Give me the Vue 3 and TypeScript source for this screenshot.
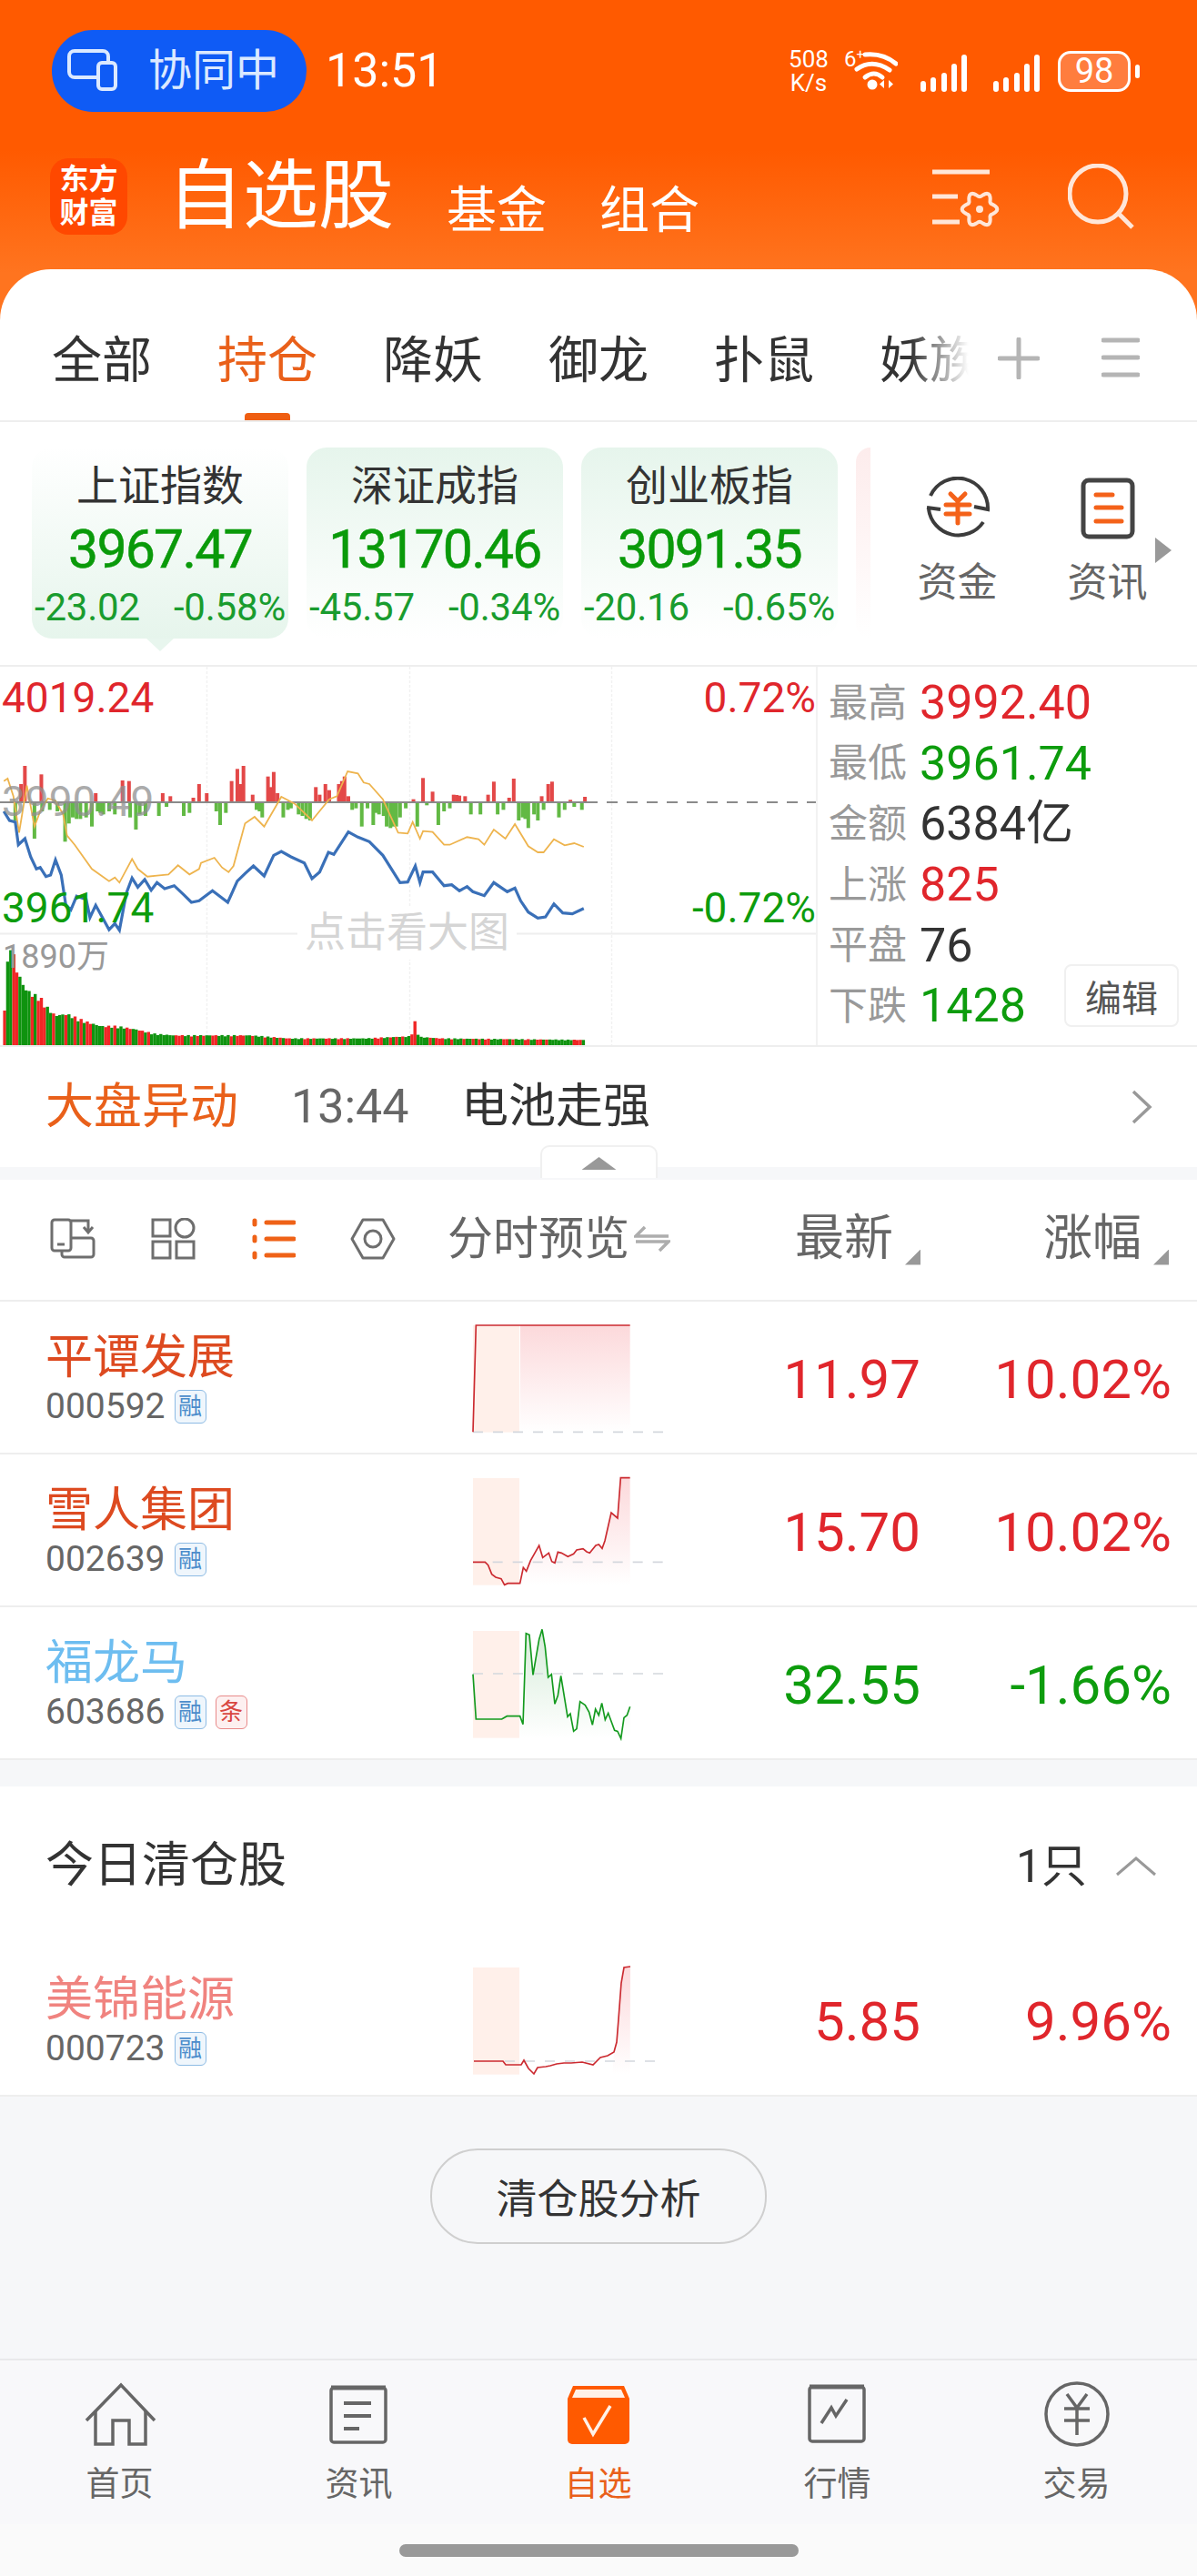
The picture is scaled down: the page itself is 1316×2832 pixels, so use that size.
<script setup lang="ts">
type Pt = [number, number];
const toPts = (a: Pt[]) => a.map((p) => p.join(",")).join(" ");
const zoomPts = (a: Pt[]) => a.map((p) => `${(p[0] / 2.376).toFixed(1)},${(p[1] / 3 - 1).toFixed(1)}`).join(" ");

const gearPath = (() => {
  const out: string[] = [];
  for (let i = 0; i < 72; i++) {
    const t = (i / 72) * Math.PI * 2;
    const r = 16.5 + 2.8 * Math.cos(6 * t);
    out.push(`${(53 + r * Math.cos(t)).toFixed(1)} ${(46 + r * Math.sin(t)).toFixed(1)}`);
  }
  return "M" + out.join("L") + "Z";
})();

const blue: Pt[] = [[10,480],[25,510],[40,515],[48,590],[65,570],[80,630],[95,670],[105,665],[120,695],[132,690],[145,640],[160,690],[172,790],[185,805],[200,760],[225,770],[235,830],[250,790],[285,870],[300,850],[312,872],[330,750],[345,700],[360,730],[378,705],[395,740],[410,715],[430,735],[455,725],[480,755],[500,780],[520,775],[555,742],[595,780],[620,710],[640,685],[662,660],[690,693],[715,625],[735,612],[760,630],[795,650],[815,702],[835,680],[858,615],[872,622],[910,548],[935,565],[965,580],[1000,625],[1045,715],[1065,713],[1085,660],[1097,715],[1105,680],[1130,680],[1160,725],[1180,722],[1200,742],[1220,728],[1235,745],[1265,758],[1290,715],[1325,745],[1345,733],[1360,775],[1380,812],[1405,832],[1425,828],[1447,785],[1470,815],[1495,818],[1525,800]];
const yellow: Pt[] = [[10,380],[20,372],[35,430],[50,550],[70,395],[90,530],[105,480],[125,437],[145,445],[165,490],[175,560],[195,590],[240,670],[285,710],[300,698],[312,715],[345,637],[360,670],[385,695],[410,692],[440,688],[465,658],[495,688],[520,670],[525,650],[560,633],[580,665],[597,680],[610,660],[640,520],[665,498],[690,530],[735,432],[770,455],[815,510],[860,440],[880,430],[908,348],[935,355],[950,385],[965,390],[1000,440],[1040,550],[1065,553],[1078,515],[1097,570],[1105,545],[1130,548],[1160,590],[1175,590],[1220,565],[1250,572],[1265,590],[1290,540],[1320,570],[1345,522],[1380,595],[1405,615],[1420,615],[1447,572],[1475,592],[1500,585],[1525,597]];
const bluePts = zoomPts(blue);
const yellowPts = zoomPts(yellow);

const redBars: Pt[] = [[55,60],[65,120],[108,92],[250,30],[320,72],[337,70],[425,30],[445,20],[505,15],[520,60],[540,30],[605,70],[620,110],[628,60],[636,120],[660,25],[700,85],[708,50],[715,100],[725,30],[825,50],[835,25],[850,60],[860,40],[885,60],[893,70],[900,85],[910,20],[1080,10],[1105,80],[1130,35],[1185,25],[1193,24],[1200,22],[1215,20],[1275,25],[1290,68],[1330,15],[1342,78],[1415,20],[1432,60],[1442,68],[1490,8],[1528,18]];
const greenBars: Pt[] = [[40,60],[90,120],[110,30],[130,25],[150,30],[170,130],[180,70],[190,50],[200,55],[210,55],[225,50],[240,80],[255,30],[262,35],[270,40],[285,30],[300,40],[340,50],[355,90],[365,40],[380,45],[415,45],[435,15],[480,45],[495,35],[565,30],[575,75],[590,35],[670,25],[678,30],[685,50],[740,50],[752,25],[760,20],[780,40],[790,45],[800,55],[810,60],[920,25],[930,20],[945,80],[960,20],[975,75],[983,35],[990,40],[1002,45],[1010,80],[1020,85],[1028,80],[1035,80],[1045,50],[1060,20],[1090,80],[1115,10],[1145,75],[1160,30],[1175,20],[1230,40],[1255,40],[1300,40],[1315,25],[1355,60],[1365,50],[1372,55],[1380,85],[1395,40],[1405,60],[1420,25],[1460,50],[1475,25],[1500,15],[1520,25]];
const macd = [
  ...redBars.map((b) => ({ x: b[0] / 2.376 - 2, y: 149 - b[1] / 3, h: b[1] / 3, c: "#e34848" })),
  ...greenBars.map((b) => ({ x: b[0] / 2.376 - 2, y: 149, h: b[1] / 3, c: "#62b944" })),
];

const volCurve: Pt[] = [[0,130],[10,130],[20,360],[40,250],[60,190],[80,170],[100,160],[120,125],[140,100],[170,105],[190,95],[220,80],[260,65],[300,65],[350,55],[400,40],[450,35],[520,35],[600,35],[650,35],[750,25],[850,25],[950,25],[1030,30],[1070,32],[1080,82],[1090,30],[1150,25],[1530,20]];
const volH = (x: number): number => {
  for (let i = 1; i < volCurve.length; i++) {
    const a = volCurve[i - 1];
    const b = volCurve[i];
    if (x <= b[0]) return a[1] + ((b[1] - a[1]) * (x - a[0])) / (b[0] - a[0]);
  }
  return 20;
};
const vol = Array.from({ length: 190 }, (_, i) => {
  const zx = 8 + i * 8;
  const n = zx === 1080 ? 1 : 0.9 + 0.14 * Math.abs(Math.sin(i * 1.7));
  const h = (volH(zx) * n) / 3;
  const red = zx === 1080 || zx === 40 || (i * 7 + (i * i) % 13) % 5 < 2;
  return { x: (zx / 2.376).toFixed(1), y: (417 - h).toFixed(1), h: h.toFixed(1), c: red ? "#f02525" : "#0f930f" };
});

const up = "#e0262c";
const down = "#0d9c0d";
interface Row {
  name: string; color: string; code: string; tags: string[]; price: string; pct: string; c: string;
  line: Pt[]; base: number; areaFrom: number; grad: string; dashFrom: number;
}
const rows: Row[] = [
  { name: "平谭发展", color: "#dd4a20", code: "000592", tags: ["融"], price: "11.97", pct: "10.02%", c: up, base: 430, areaFrom: 276, grad: "gr1", dashFrom: 120,
    line: [[120,430],[130,78],[276,78],[638,78]] },
  { name: "雪人集团", color: "#dd4a20", code: "002639", tags: ["融"], price: "15.70", pct: "10.02%", c: up, base: 355, areaFrom: 275, grad: "gr2", dashFrom: 185,
    line: [[120,860],[160,860],[170,870],[182,900],[195,910],[213,915],[224,935],[235,930],[275,930],[286,878],[296,890],[310,855],[338,805],[350,845],[370,830],[380,858],[390,863],[400,827],[412,830],[433,842],[452,833],[462,820],[483,816],[495,826],[505,830],[525,805],[535,802],[546,815],[555,790],[576,697],[597,715],[607,582],[638,582]].map((p) => [p[0], p[1] - 505] as Pt) },
  { name: "福龙马", color: "#6dbdf0", code: "603686", tags: ["融", "条"], price: "32.55", pct: "-1.66%", c: down, base: 219, areaFrom: 275, grad: "gr3", dashFrom: 120,
    line: [[120,1230],[130,1378],[215,1378],[232,1368],[275,1368],[285,1395],[295,1095],[306,1100],[318,1232],[338,1115],[348,1082],[358,1140],[368,1240],[379,1230],[390,1328],[400,1300],[410,1235],[432,1370],[441,1360],[452,1418],[462,1410],[473,1320],[490,1332],[503,1355],[514,1397],[524,1345],[535,1365],[545,1325],[556,1380],[566,1358],[587,1415],[597,1418],[608,1442],[618,1373],[628,1365],[638,1337]].map((p) => [p[0], p[1] - 1009] as Pt) },
];
const cleared: Row = { name: "美锦能源", color: "#f0837f", code: "000723", tags: ["融"], price: "5.85", pct: "9.96%", c: up, base: 387, areaFrom: 580, grad: "gr2", dashFrom: 225,
  line: [[123,387],[219,387],[228,399],[279,399],[288,384],[303,411],[321,429],[333,408],[360,405],[375,402],[396,396],[420,393],[444,393],[480,390],[516,399],[540,375],[564,369],[585,357],[594,324],[600,249],[609,129],[618,78],[639,75]] };
const lineStr = (r: Row) => toPts(r.line);
const areaStr = (r: Row) => {
  const pts = r.line.filter((p) => p[0] >= r.areaFrom);
  return toPts([[r.areaFrom, 431], ...pts, [638, 431]]);
};

const tabs = ["全部", "持仓", "降妖", "御龙", "扑鼠", "妖族"];
const indexes = [
  { name: "上证指数", price: "3967.47", a: "-23.02", b: "-0.58%" },
  { name: "深证成指", price: "13170.46", a: "-45.57", b: "-0.34%" },
  { name: "创业板指", price: "3091.35", a: "-20.16", b: "-0.65%" },
];
const stats = [
  { k: "最高", v: "3992.40", c: "#e0262c" },
  { k: "最低", v: "3961.74", c: "#0d9c0d" },
  { k: "金额", v: "6384亿", c: "#333333" },
  { k: "上涨", v: "825", c: "#e0262c" },
  { k: "平盘", v: "76", c: "#333333" },
  { k: "下跌", v: "1428", c: "#0d9c0d" },
];
const sig = [
  { x: 0, h: 12 }, { x: 11, h: 16 }, { x: 23, h: 21 }, { x: 34, h: 31 }, { x: 45, h: 41 },
];
</script>

<template>
  <div class="page">
    <header class="hdr">
      <div class="status">
        <div class="pill">
          <svg width="56" height="46" viewBox="0 0 56 46" fill="none" stroke="#dbe9ff" stroke-width="4">
            <path d="M34 31H8a6 6 0 0 1-6-6V8a6 6 0 0 1 6-6h31a6 6 0 0 1 6 6v6" />
            <rect x="34" y="15" width="19" height="29" rx="4" />
          </svg>
          <span class="pill-t">协同中</span>
        </div>
        <span class="time">13:51</span>
        <div class="st-right">
          <div class="speed"><span>508</span><span>K/s</span></div>
          <div class="wifi">
            <span class="net">6<span class="net-p">+</span></span>
            <svg width="60" height="48" viewBox="0 0 60 48">
              <path d="M24 6 Q44 4 58 16" fill="none" stroke="#fff" stroke-width="5" stroke-linecap="round" />
              <path d="M15 22 Q32 10 51 23" fill="none" stroke="#fff" stroke-width="5" stroke-linecap="round" />
              <path d="M24 31 Q34 23 43 31" fill="none" stroke="#fff" stroke-width="5" stroke-linecap="round" />
              <circle cx="32" cy="39" r="5.5" fill="#fff" />
              <path d="M45 34v9l-5-4.5zM50 34v9l5-4.5z" fill="#fff" />
            </svg>
          </div>
          <svg v-for="n in 2" :key="n" class="signal" width="52" height="42" viewBox="0 0 52 42">
            <rect v-for="s in sig" :key="s.x" :x="s.x" :y="42 - s.h" width="6" :height="s.h" rx="3" fill="#fff" />
          </svg>
          <div class="batt"><span>98</span></div>
          <i class="nub"></i>
        </div>
      </div>
      <div class="title-row">
        <div class="logo"><span>东方</span><span>财富</span></div>
        <h1 class="title">自选股</h1>
        <span class="sub-title">基金</span>
        <span class="sub-title">组合</span>
        <svg class="hd-ic1" width="76" height="68" viewBox="0 0 76 68" fill="none" stroke="#ffe6d8" stroke-width="5">
          <path d="M1 5H64M1 32H29M1 60H31" />
          <path :d="gearPath" stroke-width="4" />
          <circle cx="53" cy="46" r="4" fill="#ffe6d8" stroke="none" />
        </svg>
        <svg class="hd-ic2" width="76" height="76" viewBox="0 0 76 76" fill="none" stroke="#ffe6d8" stroke-width="5">
          <circle cx="33" cy="33" r="31" />
          <path d="M56 55L71 70" />
        </svg>
      </div>
    </header>

    <section class="panel">
      <div class="tabs">
        <div class="tab-scroll">
          <span v-for="(t, i) in tabs" :key="t" class="tab" :class="{ on: i === 1 }">{{ t }}</span>
          <i class="fade"></i>
        </div>
        <svg class="tab-ic plus" width="46" height="46" viewBox="0 0 46 46" stroke="#b5b5b5" stroke-width="5" stroke-linecap="round"><path d="M23 2V44M2 23H44" /></svg>
        <svg class="tab-ic menu" width="42" height="44" viewBox="0 0 42 44" stroke="#b5b5b5" stroke-width="5" stroke-linecap="round"><path d="M2 3H40M2 22H40M2 41H40" /></svg>
      </div>

      <div class="idx-row">
        <div v-for="(x, i) in indexes" :key="x.name" class="idx" :class="{ sel: i === 0 }">
          <div class="idx-n">{{ x.name }}</div>
          <div class="idx-p">{{ x.price }}</div>
          <div class="idx-s"><span>{{ x.a }}</span><span>{{ x.b }}</span></div>
        </div>
        <div class="idx-sliver"></div>
        <div class="quick">
          <svg width="72" height="72" viewBox="0 0 72 72" fill="none">
            <path d="M6 21A33 33 0 0 1 69 36L54 33M2 34L17 36M4 36A33 33 0 0 0 64 50" stroke="#3c3c3c" stroke-width="4" />
            <path d="M28 19l8 8 8-8M23 31H49M23 41H49M36 27V51" stroke="#f4621a" stroke-width="5" stroke-linecap="round" />
          </svg>
          <span>资金</span>
        </div>
        <div class="quick">
          <svg width="72" height="72" viewBox="0 0 72 72" fill="none">
            <rect x="9" y="4" width="54" height="62" rx="6" stroke="#444" stroke-width="5" />
            <path d="M23 20H41M23 34H51M23 49H51" stroke="#f4621a" stroke-width="5" stroke-linecap="round" />
          </svg>
          <span>资讯</span>
        </div>
        <i class="idx-next"></i>
      </div>

      <div class="market">
        <div class="chart">
          <svg class="chart-svg" width="897" height="416" viewBox="0 0 897 416">
            <path d="M227.5 0V416M450.5 0V416M672.5 0V416" stroke="#f1f1f1" stroke-width="1.5" stroke-dasharray="3 2" />
            <path d="M0 293.5H897" stroke="#eeeeee" stroke-width="2" />
            <g>
              <rect v-for="(b, i) in macd" :key="i" :x="b.x" :y="b.y" width="4" :height="b.h" :fill="b.c" />
            </g>
            <path d="M0 149H645" stroke="#8a8a8a" stroke-width="2" />
            <path d="M645 149H897" stroke="#8a8a8a" stroke-width="2" stroke-dasharray="12 10" />
            <polyline :points="yellowPts" fill="none" stroke="#eeb44e" stroke-width="1.8" />
            <polyline :points="bluePts" fill="none" stroke="#3a70b8" stroke-width="3.2" />
            <g>
              <rect v-for="(b, i) in vol" :key="i" :x="b.x" :y="b.y" width="3.4" :height="b.h" :fill="b.c" />
            </g>
          </svg>
          <span class="lb hi">4019.24</span>
          <span class="lb mid">3990.49</span>
          <span class="lb lo">3961.74</span>
          <span class="lb pct-hi">0.72%</span>
          <span class="lb pct-lo">-0.72%</span>
          <span class="lb volm">1890万</span>
          <span class="big">点击看大图</span>
        </div>
        <div class="stats">
          <div v-for="s in stats" :key="s.k" class="stat">
            <span class="stat-k">{{ s.k }}</span>
            <span class="stat-v" :style="{ color: s.c }">{{ s.v }}</span>
          </div>
          <span class="edit">编辑</span>
        </div>
      </div>

      <div class="alert">
        <span class="al-a">大盘异动</span>
        <span class="al-t">13:44</span>
        <span class="al-b">电池走强</span>
        <svg class="al-c" width="24" height="40" viewBox="0 0 24 40" fill="none" stroke="#999" stroke-width="3.5"><path d="M3 3L21 20L3 37" /></svg>
        <div class="handle"><i></i></div>
      </div>
      <div class="strip"></div>

      <div class="tools">
        <div class="tool-ics">
          <svg width="50" height="46" viewBox="0 0 50 46" fill="none" stroke="#6e6e6e" stroke-width="3">
            <rect x="2" y="2" width="21" height="34" rx="3" />
            <path d="M8 29H16" />
            <path d="M23 3H42V14M37 10l5 6 5-6" />
            <path d="M13 36v4a3 3 0 0 0 3 3H45a3 3 0 0 0 3-3V25a3 3 0 0 0-3-3H23" />
          </svg>
          <svg width="50" height="46" viewBox="0 0 50 46" fill="none" stroke="#6e6e6e" stroke-width="3">
            <rect x="3" y="2" width="19" height="18" />
            <ellipse cx="38" cy="11" rx="10" ry="10" />
            <rect x="3" y="26" width="19" height="18" />
            <rect x="29" y="26" width="19" height="18" />
          </svg>
          <svg width="50" height="46" viewBox="0 0 50 46" fill="none" stroke="#ef6217" stroke-width="5">
            <path d="M18 5H48M18 23H48M18 41H48" stroke-linecap="round" />
            <path d="M5 3V7M5 21V25M5 39V43" stroke-linecap="round" stroke-width="5" />
          </svg>
          <svg width="50" height="46" viewBox="0 0 50 46" fill="none" stroke="#6e6e6e" stroke-width="3">
            <path d="M14 2H36L48 23L36 44H14L2 23Z" stroke-linejoin="round" />
            <circle cx="25" cy="23" r="9" />
          </svg>
        </div>
        <span class="col-a">分时预览</span>
        <svg class="swap" width="40" height="30" viewBox="0 0 40 30" fill="none" stroke="#adadad" stroke-width="3.5"><path d="M12 2L2 12H38M2 18H38L28 28" /></svg>
        <span class="col-b">最新</span><i class="tri"></i>
        <span class="col-c">涨幅</span><i class="tri"></i>
      </div>

      <div v-for="r in rows" :key="r.code" class="row">
        <div class="r-name">
          <div class="nm" :style="{ color: r.color }">{{ r.name }}</div>
          <div class="cd"><span>{{ r.code }}</span><em v-for="t in r.tags" :key="t" class="tag" :class="{ red: t === '条' }">{{ t }}</em></div>
        </div>
        <svg class="spark" width="260" height="168" viewBox="0 0 780 504">
          <defs>
            <linearGradient :id="r.grad" x1="0" y1="0" x2="0" y2="1">
              <stop offset="0" :stop-color="r.c === up ? '#fcd9db' : '#d6ecd9'" />
              <stop offset="1" stop-color="#ffffff" />
            </linearGradient>
          </defs>
          <rect x="120" y="78" width="153" height="353" fill="#fff0ea" />
          <polygon :points="areaStr(r)" :fill="`url(#${r.grad})`" />
          <path :d="`M${r.dashFrom} ${r.base}H748`" stroke="#d4d7dd" stroke-width="5" stroke-dasharray="33 33" />
          <polyline :points="lineStr(r)" fill="none" :stroke="r.c === up ? '#cb2a30' : '#139a1e'" stroke-width="5" />
        </svg>
        <span class="r-p" :style="{ color: r.c }">{{ r.price }}</span>
        <span class="r-q" :style="{ color: r.c }">{{ r.pct }}</span>
      </div>
      <div class="strip big-strip"></div>

      <div class="clear-h">
        <span class="ch-t">今日清仓股</span>
        <span class="ch-n">1只</span>
        <svg class="ch-c" width="46" height="24" viewBox="0 0 46 24" fill="none" stroke="#999" stroke-width="3"><path d="M2 21L23 3L44 21" /></svg>
      </div>
      <div class="row">
        <div class="r-name">
          <div class="nm" :style="{ color: cleared.color }">{{ cleared.name }}</div>
          <div class="cd"><span>{{ cleared.code }}</span><em class="tag">融</em></div>
        </div>
        <svg class="spark" width="260" height="168" viewBox="0 0 780 504">
          <defs>
            <linearGradient id="gr4" x1="0" y1="0" x2="0" y2="1">
              <stop offset="0" stop-color="#fcd9db" />
              <stop offset="1" stop-color="#ffffff" />
            </linearGradient>
          </defs>
          <rect x="120" y="78" width="153" height="353" fill="#fff0ea" />
          <polygon :points="areaStr(cleared)" fill="url(#gr4)" />
          <path d="M225 387H748" stroke="#d4d7dd" stroke-width="5" stroke-dasharray="33 33" />
          <polyline :points="lineStr(cleared)" fill="none" stroke="#cb2a30" stroke-width="5" />
        </svg>
        <span class="r-p" :style="{ color: cleared.c }">{{ cleared.price }}</span>
        <span class="r-q" :style="{ color: cleared.c }">{{ cleared.pct }}</span>
      </div>

      <div class="rest">
        <button class="analyze">清仓股分析</button>
      </div>

      <nav class="nav">
        <div class="nav-i">
          <svg width="80" height="76" viewBox="0 0 80 76" fill="none" stroke="#666" stroke-width="3.5">
            <path d="M3 44L41 5L78 44" />
            <path d="M13 33V70H32V44H50V70H68V33" />
          </svg>
          <span>首页</span>
        </div>
        <div class="nav-i">
          <svg width="80" height="76" viewBox="0 0 80 76" fill="none" stroke="#666" stroke-width="3.5">
            <rect x="9" y="8" width="60" height="60" rx="3" />
            <path d="M23 25H53M23 39H53M23 53H40" stroke-width="4" />
            <path d="M9 8H69" stroke-width="5" />
          </svg>
          <span>资讯</span>
        </div>
        <div class="nav-i on">
          <svg width="80" height="76" viewBox="0 0 80 76">
            <path d="M12 6H68L74 20V65a5 5 0 0 1-5 5H11a5 5 0 0 1-5-5V20Z" fill="#ff5a00" />
            <path d="M15 10H65L69 19H11Z" fill="#fff1e8" />
            <path d="M24 41L34 59L53 28" fill="none" stroke="#fff1e8" stroke-width="3.5" />
          </svg>
          <span>自选</span>
        </div>
        <div class="nav-i">
          <svg width="80" height="76" viewBox="0 0 80 76" fill="none" stroke="#666" stroke-width="3.5">
            <rect x="9" y="7" width="60" height="60" rx="3" />
            <path d="M9 7H69" stroke-width="5" />
            <path d="M22 47L33 30L38 39L50 21" stroke-width="3.5" />
          </svg>
          <span>行情</span>
        </div>
        <div class="nav-i">
          <svg width="80" height="76" viewBox="0 0 80 76" fill="none" stroke="#666" stroke-width="3.5">
            <circle cx="40" cy="37" r="34" />
            <path d="M29 15L40 30L51 15M26 31H54M26 44H54M40 30V60" />
          </svg>
          <span>交易</span>
        </div>
      </nav>
      <div class="home"><i></i></div>
    </section>
  </div>
</template>

<style>
html, body { margin: 0; padding: 0; }
</style>

<style scoped>
.page {
  width: 1316px;
  height: 2832px;
  overflow: hidden;
  font-family: Roboto, "Noto Sans CJK SC", sans-serif;
  color: #333;
  background: linear-gradient(#ff5a00 0, #ff5a00 165px, #ff741f 300px, #ff741f 400px) no-repeat top / 100% 400px;
  display: flex;
  flex-direction: column;
}
.page * { box-sizing: border-box; }
i, em { font-style: normal; display: block; }
.hdr { height: 296px; flex: none; padding-top: 33px; }
.status { height: 90px; display: flex; align-items: center; padding-left: 57px; }
.pill {
  width: 280px; height: 90px; border-radius: 45px; background: #0f5bf5;
  display: flex; align-items: center; padding-left: 17px;
}
.pill svg { margin-top: -2px; }
.pill-t { font-size: 48px; line-height: 1; color: #dbe9ff; margin-left: 33px; white-space: nowrap; }
.time { font-size: 52px; color: #fff; line-height: 1; margin-left: 21px; }
.st-right { margin-left: auto; display: flex; align-items: center; padding-right: 63px; }
.speed { display: flex; flex-direction: column; align-items: center; font-size: 26px; line-height: 26px; color: #fff; width: 46px; margin-right: 15px; }
.wifi { margin-right: 25px; position: relative; width: 60px; height: 48px; }
.wifi svg { display: block; }
.net { position: absolute; left: 1px; top: -3px; font-size: 24px; line-height: 28px; color: #fff; white-space: nowrap; }
.net-p { font-size: 15px; position: relative; top: -8px; }
.signal { margin-right: 28px; margin-top: 4px; }
.signal:nth-of-type(2) { margin-right: 19px; }
.batt {
  width: 80px; height: 45px; border: 3.5px solid #fff; border-radius: 14px; background: #ff7d3e;
  display: flex; align-items: center; justify-content: center;
  color: #fff; font-size: 38px; line-height: 1;
}
.nub { width: 5px; height: 15px; background: #fff; border-radius: 3px; margin-left: 5px; }
.title-row { display: flex; align-items: flex-end; height: 135px; padding-left: 55px; position: relative; }
.logo {
  width: 85px; height: 84px; border-radius: 20px; background: #ff4800; color: #fff;
  display: flex; flex-direction: column; align-items: center; justify-content: center;
  font-size: 32px; line-height: 37px; font-weight: 700;
}
.title { margin: 0 0 -2px 44px; font-size: 83px; font-weight: 400; line-height: 88px; color: #fff; white-space: nowrap; }
.sub-title { font-size: 55px; line-height: 60px; color: #fff; margin-left: 58px; margin-bottom: -3px; white-space: nowrap; }
.hd-ic1 { position: absolute; left: 1024px; top: 61px; }
.hd-ic2 { position: absolute; left: 1174px; top: 57px; }
.panel { flex: 1; background: #fff; border-radius: 56px 56px 0 0; display: flex; flex-direction: column; min-height: 0; }
.tabs { height: 168px; flex: none; border-bottom: 2px solid #eeeeee; display: flex; align-items: flex-start; position: relative; }
.tab-scroll {
  width: 1076px; height: 166px; overflow: hidden; display: flex; gap: 72px; padding-left: 57px; padding-top: 65px; position: relative; flex: none;
}
.tab { font-size: 55px; line-height: 70px; height: 70px; flex: none; position: relative; white-space: nowrap; color: #333; }
.tab.on { color: #e9601a; }
.tab.on::after {
  content: ""; position: absolute; left: 30px; bottom: -31px; width: 50px; height: 8px; border-radius: 4px 4px 0 0; background: #ef5e12;
}
.fade { position: absolute; right: 0; top: 50px; width: 75px; height: 90px; background: linear-gradient(90deg, rgba(255,255,255,0), #fff 85%); }
.tab-ic.plus { position: absolute; left: 1097px; top: 75px; }
.tab-ic.menu { position: absolute; left: 1211px; top: 75px; }
.idx-row { height: 267px; flex: none; display: flex; align-items: flex-start; padding: 28px 0 0 35px; position: relative; }
.idx {
  width: 282px; height: 210px; margin-right: 20px; border-radius: 22px; flex: none; padding: 20px 3px 0;
  background: linear-gradient(#e6f5ec, #ffffff); text-align: center; position: relative;
}
.idx.sel { background: linear-gradient(#ffffff, #e6f5ec); }
.idx.sel::after {
  content: ""; position: absolute; left: 126px; bottom: -14px; width: 30px; height: 14px; background: #e8f6ee;
  clip-path: polygon(0 0, 100% 0, 50% 100%);
}
.idx-n { font-size: 46px; line-height: 44px; color: #333; white-space: nowrap; }
.idx-p { font-size: 59px; line-height: 60px; margin-top: 18px; color: #0a9a0a; font-weight: 400; letter-spacing: -1.8px; white-space: nowrap; -webkit-text-stroke: 0.5px #0a9a0a; }
.idx-s { display: flex; justify-content: space-between; font-size: 42px; line-height: 40px; margin-top: 14px; color: #199c2e; white-space: nowrap; letter-spacing: -0.2px; }
.idx-sliver { width: 16px; height: 210px; flex: none; border-radius: 18px 0 0 18px; background: linear-gradient(#fdecec, #fff); }
.quick { width: 165px; flex: none; display: flex; flex-direction: column; align-items: center; }
.idx-sliver + .quick { margin-left: 13px; }
.quick svg { margin-top: 32px; }
.quick span { font-size: 44px; line-height: 50px; color: #666; margin-top: 20px; white-space: nowrap; }
.idx-next {
  position: absolute; left: 1270px; top: 127px; width: 18px; height: 28px; background: #999;
  clip-path: polygon(0 0, 100% 50%, 0 100%);
}
.market { height: 420px; flex: none; display: flex; border-top: 2px solid #eeeeee; border-bottom: 2px solid #eeeeee; }
.chart { width: 897px; flex: none; position: relative; overflow: hidden; }
.chart-svg { display: block; }
.lb { position: absolute; font-size: 46px; line-height: 50px; white-space: nowrap; }
.hi { left: 2px; top: 9px; color: #e0262c; }
.mid { left: 2px; top: 123px; color: #8f8f8f; opacity: .75; }
.lo { left: 2px; top: 240px; color: #0d9c0d; }
.pct-hi { right: 0; top: 9px; color: #e0262c; }
.pct-lo { right: 0; top: 240px; color: #0d9c0d; }
.volm { left: 3px; top: 297px; font-size: 36px; line-height: 44px; color: #999; }
.big { position: absolute; left: 327px; top: 264px; padding: 0 8px; font-size: 45px; line-height: 58px; color: #d5d5d5; background: #fff; white-space: nowrap; }
.stats { flex: 1; border-left: 2px solid #f2f2f2; padding: 7px 0 0 12px; position: relative; }
.stat { height: 66.6px; display: flex; align-items: center; white-space: nowrap; }
.stat-k { font-size: 43px; color: #999; width: 100px; flex: none; line-height: 1; }
.stat-v { font-size: 52px; line-height: 1; }
.edit {
  position: absolute; right: 20px; top: 327px; width: 126px; height: 69px; border: 2px solid #f0f0f0; border-radius: 8px;
  display: flex; align-items: center; justify-content: center; font-size: 40px; color: #555; background: #fff;
}
.alert { height: 132px; flex: none; display: flex; align-items: center; padding-left: 50px; position: relative; }
.al-a { font-size: 53px; color: #e9601a; font-weight: 400; line-height: 1; width: 270px; white-space: nowrap; }
.al-t { font-size: 52px; color: #666; line-height: 1; width: 187px; }
.al-b { font-size: 52px; color: #333; line-height: 1; white-space: nowrap; }
.al-c { position: absolute; left: 1243px; top: 46px; }
.handle {
  position: absolute; left: 594px; bottom: -12px; width: 129px; height: 36px; background: #fff;
  border: 2px solid #f0f0f0; border-bottom: 0; border-radius: 10px 10px 0 0; z-index: 2;
}
.handle i { width: 38px; height: 14px; margin: 11px auto 0; background: #999; clip-path: polygon(50% 0, 100% 100%, 0 100%); }
.strip { height: 14px; flex: none; background: #f6f7f9; }
.big-strip { height: 29px; }
.tools { height: 134px; flex: none; display: flex; align-items: center; padding: 0 0 2px 55px; border-bottom: 2px solid #eeeeee; }
.tool-ics { display: flex; gap: 60px; flex: none; }
.col-a { font-size: 50px; line-height: 1; color: #666; margin-left: 57px; flex: none; white-space: nowrap; }
.swap { margin-left: 5px; flex: none; }
.col-b { font-size: 54px; line-height: 1; color: #666; margin-left: 137px; flex: none; white-space: nowrap; }
.col-c { font-size: 54px; line-height: 1; color: #666; margin-left: 135px; flex: none; white-space: nowrap; }
.tri { width: 17px; height: 17px; margin: 40px 0 0 13px; background: #999; clip-path: polygon(100% 0, 100% 100%, 0 100%); flex: none; }
.row {
  height: 168px; flex: none; display: grid; grid-template-columns: 480px 260px 272px 276px; align-items: center;
  border-bottom: 2px solid #eeeeee;
}
.r-name { align-self: start; padding: 32px 0 0 50px; }
.nm { font-size: 52px; line-height: 60px; white-space: nowrap; }
.cd { display: flex; align-items: center; margin-top: 3px; height: 40px; font-size: 39px; color: #666; line-height: 40px; }
.tag {
  width: 35px; height: 37px; margin-left: 10px; border: 1.5px solid #8dbbe4; border-radius: 6px; background: #eff6fc;
  color: #4c8ccb; font-size: 26px; line-height: 34px; text-align: center; flex: none;
}
.tag.red { border-color: #e88a8a; background: #fdf0f0; color: #d9463f; }
.spark { display: block; align-self: start; }
.r-p { font-size: 60px; line-height: 1; text-align: right; padding-top: 4px; }
.r-q { font-size: 60px; line-height: 1; text-align: right; padding-top: 4px; white-space: nowrap; }
.clear-h { height: 173px; flex: none; display: flex; align-items: center; padding: 2px 44px 0 50px; }
.ch-t { font-size: 53px; line-height: 1; color: #333; white-space: nowrap; }
.ch-n { font-size: 50px; line-height: 1; color: #333; margin-left: auto; white-space: nowrap; }
.ch-c { margin-left: 31px; flex: none; }
.rest { flex: 1; min-height: 0; background: #f6f7f9; display: flex; justify-content: center; align-items: flex-start; padding-top: 57px; }
.analyze {
  width: 370px; height: 105px; border-radius: 52px; border: 2px solid #cfcfcf; background: transparent;
  font-family: inherit; font-size: 45px; color: #333; padding: 0; margin: 0; white-space: nowrap;
}
.nav { height: 182px; flex: none; display: grid; grid-template-columns: repeat(5, 263px); border-top: 2px solid #e9e9eb; background: #f8f8fa; }
.nav-i { display: flex; flex-direction: column; align-items: center; padding-top: 22px; color: #666; }
.nav-i svg { display: block; }
.nav-i span { font-size: 37px; line-height: 44px; margin-top: 17px; white-space: nowrap; }
.nav-i.on span { color: #e9601a; }
.home { height: 57px; flex: none; background: #fafafa; display: flex; justify-content: center; padding-top: 22px; }
.home i { width: 439px; height: 14px; border-radius: 7px; background: #999; }
</style>
